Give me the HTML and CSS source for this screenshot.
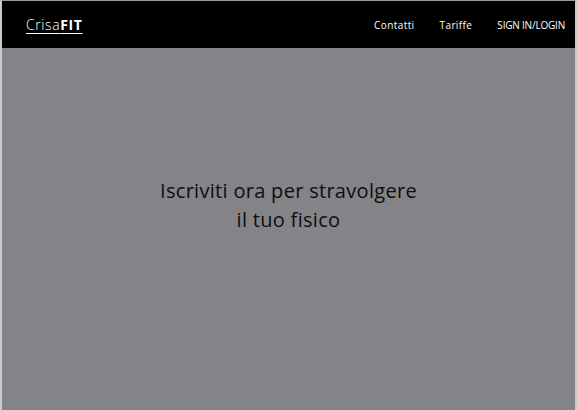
FILE: index.html
```html
<!DOCTYPE html>
<html lang="it">
<head>
<meta charset="utf-8">
<link rel="stylesheet" href="styles.css">
<title>CrisaFIT</title>
</head>
<body>
<div class="frame">
  <header class="nav">
    <a class="logo" href="#">Crisa<b>FIT</b></a>
    <nav class="links">
      <a href="#">Contatti</a>
      <a href="#">Tariffe</a>
      <a href="#" class="caps">SIGN IN/LOGIN</a>
    </nav>
  </header>
  <main class="hero">
    <h1>Iscriviti ora per stravolgere<br>il tuo fisico</h1>
  </main>
</div>
</body>
</html>
```
FILE: styles.css
```css
html, body { margin: 0; padding: 0; height: 100%; }
body { font-family: "Open Sans", "DejaVu Sans", sans-serif; background: #c9c9c9; }
.frame {
  box-sizing: border-box;
  height: 410px;
  border-top: 1px solid #9a9a9a;
  border-left: 2px solid #c9c9c9;
  border-right: 2px solid #c9c9c9;
  display: flex;
  flex-direction: column;
}
.nav {
  height: 47px;
  background: #000;
  display: flex;
  align-items: center;
  justify-content: space-between;
  padding: 0 10px 0 24px;
  flex: none;
}
.logo {
  color: #fff;
  font-size: 14px;
  font-weight: 300;
  text-decoration: underline;
  text-underline-offset: 3px;
  letter-spacing: 0.6px;
}
.logo b { font-weight: 700; }
.links { display: flex; gap: 25px; }
.links a {
  color: #fff;
  text-decoration: none;
  font-size: 10px;
  letter-spacing: 0.4px;
}
.links a.caps { letter-spacing: -0.2px; }
.hero {
  flex: 1;
  background: #848388;
  display: flex;
  align-items: center;
  justify-content: center;
  padding-bottom: 49px;
}
.hero h1 {
  margin: 0;
  text-align: center;
  font-weight: 400;
  font-size: 20px;
  line-height: 29px;
  letter-spacing: 0.3px;
  color: #0d0d0d;
}
```
